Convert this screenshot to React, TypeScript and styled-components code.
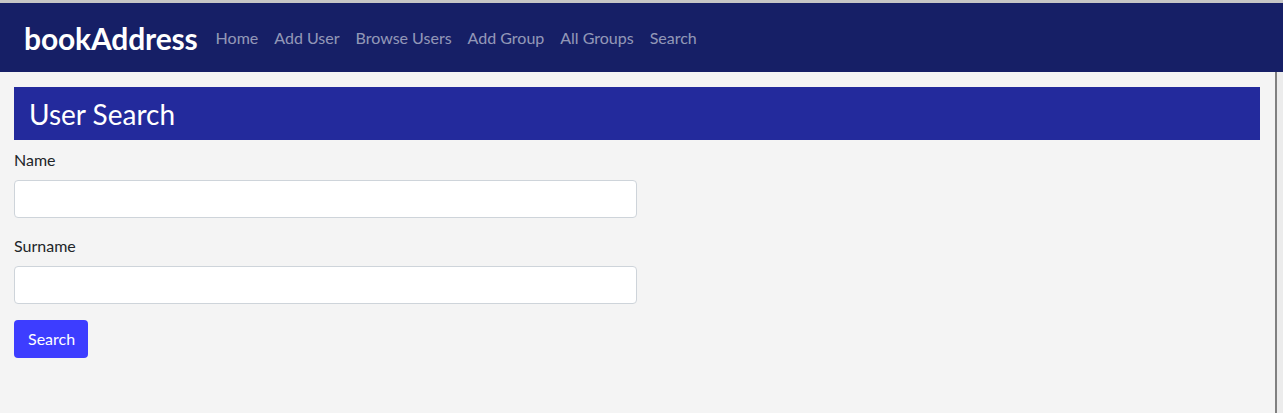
import React from 'react'
import styled, { createGlobalStyle } from 'styled-components'

const GlobalStyle = createGlobalStyle`
  body {
    margin: 0;
    background: #ececec;
    font-family: Lato, "Noto Sans", sans-serif;
  }
`

const Page = styled.div`
  border-top: 3px solid #c6c6c6;
  min-height: 410px;
  display: flex;
  flex-direction: column;
`

const NavBar = styled.nav`
  height: 69px;
  background: #161f66;
  display: flex;
  align-items: center;
  padding: 0 24px;
  gap: 10px;
`

const Brand = styled.a`
  color: #ffffff;
  font-weight: 700;
  font-size: 30px;
  text-decoration: none;
  letter-spacing: -0.15px;
`

const NavLinks = styled.div`
  display: flex;
`

const NavLink = styled.a`
  color: rgba(255, 255, 255, 0.55);
  font-size: 16px;
  padding: 0 8px;
  text-decoration: none;
`

const Main = styled.main`
  flex: 1;
  width: 1246px;
  background: #f4f4f4;
  border-right: 2px solid #808080;
  padding: 15px 15px 40px 14px;
`

const Heading = styled.h1`
  margin: 0 0 8px;
  height: 53px;
  background: #232a9c;
  color: #ffffff;
  font-size: 28px;
  font-weight: 400;
  display: flex;
  align-items: center;
  padding: 0 15px;
`

const Field = styled.div`
  margin-bottom: 16px;
`

const Label = styled.label`
  display: block;
  color: #212529;
  font-size: 16px;
  line-height: 24px;
  margin-bottom: 8px;
`

const Input = styled.input`
  display: block;
  box-sizing: border-box;
  width: 623px;
  height: 38px;
  border: 1px solid #ced4da;
  border-radius: 4px;
  background: #ffffff;
  font-family: inherit;
  font-size: 16px;
  padding: 6px 12px;
`

const Button = styled.button`
  height: 38px;
  padding: 0 13px 1px 14px;
  background: #3d3dff;
  color: #ffffff;
  border: none;
  border-radius: 4px;
  font-family: inherit;
  font-size: 16px;
`

export default function App() {
  const links = ['Home', 'Add User', 'Browse Users', 'Add Group', 'All Groups', 'Search']
  return (
    <>
      <GlobalStyle />
      <Page>
        <NavBar>
          <Brand href="#">bookAddress</Brand>
          <NavLinks>
            {links.map((l) => (
              <NavLink key={l} href="#">{l}</NavLink>
            ))}
          </NavLinks>
        </NavBar>
        <Main>
          <Heading>User Search</Heading>
          <Field>
            <Label>Name</Label>
            <Input type="text" />
          </Field>
          <Field>
            <Label>Surname</Label>
            <Input type="text" />
          </Field>
          <Button>Search</Button>
        </Main>
      </Page>
    </>
  )
}
